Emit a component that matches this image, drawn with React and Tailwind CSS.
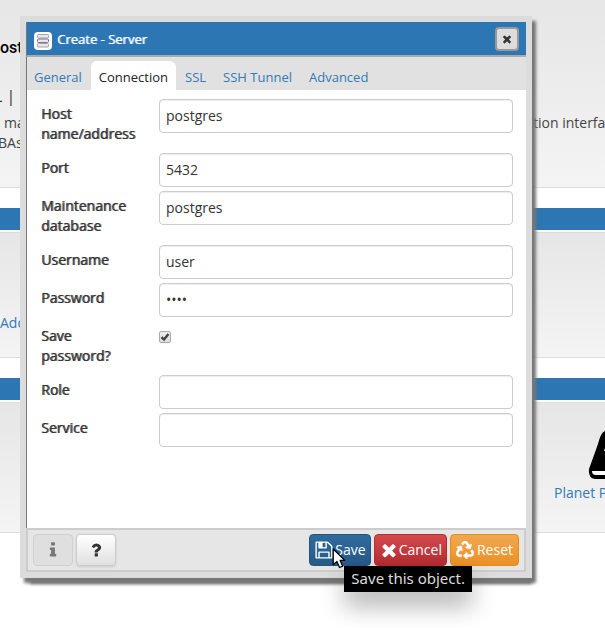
import React from "react";

const PATHS = {
  save: "M512 1536h768v-384h-768v384zm896 0h128v-896q0-14-10-38.5t-20-34.5l-281-281q-10-10-34-20t-39-10v416q0 40-28 68t-68 28h-576q-40 0-68-28t-28-68v-416h-128v1280h128v-416q0-40 28-68t68-28h832q40 0 68 28t28 68v416zm-384-928v-320q0-13-9.5-22.5t-22.5-9.5h-192q-13 0-22.5 9.5t-9.5 22.5v320q0 13 9.5 22.5t22.5 9.5h192q13 0 22.5-9.5t9.5-22.5zm640 32v928q0 40-28 68t-68 28h-1344q-40 0-68-28t-28-68v-1344q0-40 28-68t68-28h928q40 0 88 20t76 48l280 280q28 28 48 76t20 88z",
  close: "M1490 1322q0 40-28 68l-136 136q-28 28-68 28t-68-28l-294-294-294 294q-28 28-68 28t-68-28l-136-136q-28-28-28-68t28-68l294-294-294-294q-28-28-28-68t28-68l136-136q28-28 68-28t68 28l294 294 294-294q28-28 68-28t68 28l136 136q28 28 28 68t-28 68l-294 294 294 294q28 28 28 68z",
  info: "M1216 1344v128q0 26-19 45t-45 19h-512q-26 0-45-19t-19-45v-128q0-26 19-45t45-19h64v-384h-64q-26 0-45-19t-19-45v-128q0-26 19-45t45-19h384q26 0 45 19t19 45v576h64q26 0 45 19t19 45zm-128-1152v192q0 26-19 45t-45 19h-256q-26 0-45-19t-19-45v-192q0-26 19-45t45-19h256q26 0 45 19t19 45z",
  question: "M1088 1256v240q0 16-12 28t-28 12h-240q-16 0-28-12t-12-28v-240q0-16 12-28t28-12h240q16 0 28 12t12 28zm316-600q0 54-15.5 101t-35 76.5-55 59.5-57.5 43.5-61 35.5q-41 23-68.5 65t-27.5 67q0 17-12 32.5t-28 15.5h-240q-15 0-25.5-18.5t-10.5-37.5v-45q0-83 65-156.5t143-108.5q59-27 84-56t25-76q0-42-46.5-74t-107.5-32q-65 0-108 29-35 25-107 115-13 16-31 16-12 0-25-8l-164-125q-13-10-15.5-25t5.5-28q160-266 464-266 80 0 161 31t146 83 106 127.5 41 158.5z",
};

function Icon({ name, className }) {
  return (
    <svg viewBox="0 0 1792 1792" fill="currentColor" aria-hidden="true" className={className}>
      <path d={PATHS[name]} />
    </svg>
  );
}

function RecycleIcon({ className }) {
  return (
    <svg viewBox="0 0 512 512" fill="currentColor" stroke="currentColor" strokeWidth="12" aria-hidden="true" className={className}>
      <path d="M184.561 261.903c3.232 13.997-12.123 24.635-24.068 17.168l-40.736-25.455-50.867 81.402C55.606 356.273 70.96 384 96.012 384H148c6.627 0 12 5.373 12 12v40c0 6.627-5.373 12-12 12H96.115c-75.334 0-121.302-83.048-81.408-146.88l50.822-81.388-40.725-25.448c-12.081-7.547-8.966-25.961 4.879-29.158l110.237-25.45c8.611-1.988 17.201 3.381 19.189 11.99l25.452 110.237zm98.561-182.915l41.289 66.076-40.74 25.457c-12.051 7.528-9 25.953 4.879 29.158l110.237 25.45c8.672 1.999 17.215-3.438 19.189-11.99l25.45-110.237c3.197-13.844-11.99-24.719-24.068-17.168l-40.687 25.424-41.263-66.082c-37.521-60.033-125.209-60.171-162.816 0l-17.963 28.766c-3.51 5.62-1.8 13.021 3.82 16.533l33.919 21.195c5.62 3.512 13.024 1.803 16.536-3.817l17.961-28.743c12.712-20.341 41.973-19.676 54.257-.022zM497.288 301.12l-27.515-44.065c-3.511-5.623-10.916-7.334-16.538-3.821l-33.861 21.159c-5.62 3.512-7.33 10.915-3.818 16.536l27.564 44.112c13.257 21.211-2.057 48.96-27.136 48.96H320V336.02c0-14.213-17.242-21.383-27.313-11.313l-80 79.981c-6.249 6.248-6.249 16.379 0 22.627l80 79.989C302.689 517.308 320 510.3 320 495.989V448h95.88c75.274 0 121.335-82.997 81.408-146.88z" />
    </svg>
  );
}

function ServerIcon() {
  return (
    <svg viewBox="0 0 18 18" aria-hidden="true" className="mt-1 size-[18px] rounded-sm bg-white">
      <g fill="#e8e8ea" stroke="#a3a3a8" strokeWidth="1">
        <rect x="3.5" y="2.5" width="11" height="3.5" rx="1" />
        <rect x="3.5" y="11.5" width="11" height="3.5" rx="1" />
        <rect x="3.5" y="7" width="11" height="3.5" rx="1" stroke="#77778f" />
      </g>
    </svg>
  );
}

function BookIcon() {
  return (
    <svg viewBox="0 0 64 50" aria-hidden="true" className="h-[50px] w-16 shrink-0">
      <path d="M17 0H60L50 48H7Q0 47 1 38L10 13Q13 1 17 0Z" fill="#000" />
      <path d="M4 40H48V44H8Q4 44 4 40Z" fill="#fff" />
      <path d="M17 17h24v3H16Z" fill="#fff" />
    </svg>
  );
}

function Pointer({ className }) {
  return (
    <svg viewBox="0 0 13 20" aria-hidden="true" className={className}>
      <path d="M1 1V16L4.5 12.8L7 18.6L10 17.3L7.6 11.8H12Z" fill="#fff" stroke="#000" strokeWidth="1.2" strokeLinejoin="round" />
    </svg>
  );
}

const labelCls =
  "w-[118px] shrink-0 py-[5px] pr-5 text-sm leading-5 text-[#333] [text-shadow:1px_0_0_#666]";

function Row({ id, label, children }) {
  return (
    <div className="mb-1 flex items-start">
      <label htmlFor={id} className={labelCls}>{label}</label>
      {children}
    </div>
  );
}

function Field({ id, label, type = "text", value = "" }) {
  return (
    <Row id={id} label={label}>
      <input
        id={id}
        type={type}
        defaultValue={value}
        className="h-[34px] min-w-0 flex-1 rounded border border-[#ccc] bg-white px-1.5 pb-0.5 text-sm text-[#333] shadow-[inset_0_1px_1px_rgba(0,0,0,0.075)] outline-none"
      />
    </Row>
  );
}

const panelCls = "border-b border-[#ddd] bg-linear-to-b from-[#e6e6e6] to-[#f4f4f4]";
const btnCls = "flex h-8 items-center rounded border text-sm text-white";

function Backdrop() {
  return (
    <div className="bg-white">
      <section className={`${panelCls} h-[188px] pt-9`}>
        <h1 className="font-[Roboto,sans-serif] text-base leading-6 font-medium text-black">ost</h1>
        <p className="-ml-1.5 pt-6 text-base leading-6 whitespace-pre text-[#333]">L |</p>
        <div className="flex justify-between pt-[5px] pl-1 text-sm leading-5 text-[#444]">
          <p>ma</p>
          <p className="w-[72px] whitespace-nowrap">tion interface</p>
        </div>
        <p className="-ml-0.5 text-sm leading-5 text-[#444]">BAs</p>
      </section>
      <div className="mt-5 h-[22px] bg-[#2c76b4]" />
      <section className={`${panelCls} mt-0.5 h-[126px] border-t border-t-[#ddd] pt-20 text-sm leading-5`}>
        <a href="#add" className="block text-[#337ab7]">Add</a>
      </section>
      <div className="mt-5 h-[22px] bg-[#2c76b4]" />
      <section className={`${panelCls} mt-0.5 flex h-[131px] flex-col items-end border-t border-t-[#ddd] pt-7`}>
        <div className="flex w-[17px]"><BookIcon /></div>
        <a href="#planet" className="w-[51px] pt-0.5 text-sm leading-5 whitespace-nowrap text-[#337ab7]">Planet PostgreSQL</a>
      </section>
    </div>
  );
}

const TABS = ["General", "Connection", "SSL", "SSH Tunnel", "Advanced"];

function Tabs() {
  return (
    <div role="tablist" className="flex h-[33px] items-end gap-px border-l border-[#777] bg-[#e1e1e1]">
      {TABS.map((tab) => (
        <button
          key={tab}
          type="button"
          role="tab"
          aria-selected={tab === "Connection"}
          className="h-[29px] rounded-t-md px-2 pt-0.5 text-[13px] leading-5 whitespace-nowrap text-[#337ab7] first:pl-[7px] aria-selected:bg-white aria-selected:text-[#222]"
        >
          {tab}
        </button>
      ))}
    </div>
  );
}

function Footer() {
  return (
    <footer className="flex items-center gap-[3px] border-2 border-[#ccc] bg-[#e6e6e6] px-[5px] py-1">
      <button type="button" disabled aria-label="Object information" className="flex h-8 w-10 items-center justify-center rounded border border-[#d0d0d0] bg-[#dfdfdf] text-[#777]">
        <Icon name="info" className="size-[18px]" />
      </button>
      <button type="button" aria-label="Help" className="mr-auto flex h-8 w-10 items-center justify-center rounded border border-[#ccc] bg-linear-to-b from-white to-[#e0e0e0] text-[#333] shadow-sm">
        <Icon name="question" className="size-[18px]" />
      </button>
      <div className="relative">
        <button type="button" aria-describedby="save-tip" className={`${btnCls} gap-px px-1 border-[#245580] bg-linear-to-b from-[#2f6b9d] to-[#265a87]`}>
          <Icon name="save" className="size-5" />
          Save
        </button>
        <div id="save-tip" role="tooltip" className="absolute top-8 left-[35px] bg-black px-[7px] pt-0.5 pb-1 font-['Noto_Sans',sans-serif] text-[15px] leading-5 whitespace-nowrap text-[#ddd] shadow-[0_14px_24px_rgba(0,0,0,0.3)]">
          Save this object.
        </div>
        <Pointer className="absolute top-3.5 left-[23px] h-[21px] w-3.5" />
      </div>
      <button type="button" className={`${btnCls} px-1 border-[#b92c28] bg-linear-to-b from-[#d14a4e] to-[#b52b31]`}>
        <Icon name="close" className="size-5" />
        Cancel
      </button>
      <button type="button" className={`${btnCls} gap-[3px] px-[5px] border-[#e38d13] bg-linear-to-b from-[#f0a850] to-[#eb9024]`}>
        <RecycleIcon className="size-[18px]" />
        Reset
      </button>
    </footer>
  );
}

export default function App() {
  return (
    <div className="relative min-h-screen overflow-hidden bg-white font-['Open_Sans','Noto_Sans',sans-serif]">
      <Backdrop />
      <div
        role="dialog"
        aria-label="Create - Server"
        className="absolute top-4 right-[73px] left-5 border-6 border-[#dcdcdc] bg-white shadow-[5px_11px_3px_-5px_#777,4px_5px_3px_0px_#777]"
      >
        <header className="flex h-[35px] items-center border-b-2 border-l border-b-[#aaa] border-l-[#777] bg-[#2c76b4] pr-[7px] pl-[7px]">
          <ServerIcon />
          <h2 className="flex-1 pt-0.5 pl-[5px] text-[13px] text-white [text-shadow:1px_0_0_#b4cfe6]">Create - Server</h2>
          <button type="button" aria-label="Close" className="flex size-6 items-center justify-center rounded border-2 border-[#999] bg-[#ddd] text-[#333]">
            <Icon name="close" className="size-3" />
          </button>
        </header>
        <Tabs />
        <form className="border-l border-[#777] pt-[9px] pr-[13px] pb-[77px] pl-3.5">
          <Field id="host" label="Host name/address" value="postgres" />
          <Field id="port" label="Port" value="5432" />
          <Field id="db" label="Maintenance database" value="postgres" />
          <Field id="user" label="Username" value="user" />
          <Field id="pass" label="Password" type="password" value="pass" />
          <Row id="remember" label="Save password?">
            <span className="relative mt-2.5 flex">
              <input
                id="remember"
                type="checkbox"
                defaultChecked
                className="peer size-3 appearance-none rounded-xs border border-[#aaa] bg-linear-to-b from-[#eee] to-[#ddd]"
              />
              <svg viewBox="0 0 12 12" aria-hidden="true" className="pointer-events-none absolute inset-0 size-3 opacity-0 peer-checked:opacity-100">
                <path d="M2.5 6.2L5 8.6L9.5 3" fill="none" stroke="#444" strokeWidth="2.4" />
              </svg>
            </span>
          </Row>
          <Field id="role" label="Role" />
          <Field id="service" label="Service" />
        </form>
        <Footer />
      </div>
    </div>
  );
}
